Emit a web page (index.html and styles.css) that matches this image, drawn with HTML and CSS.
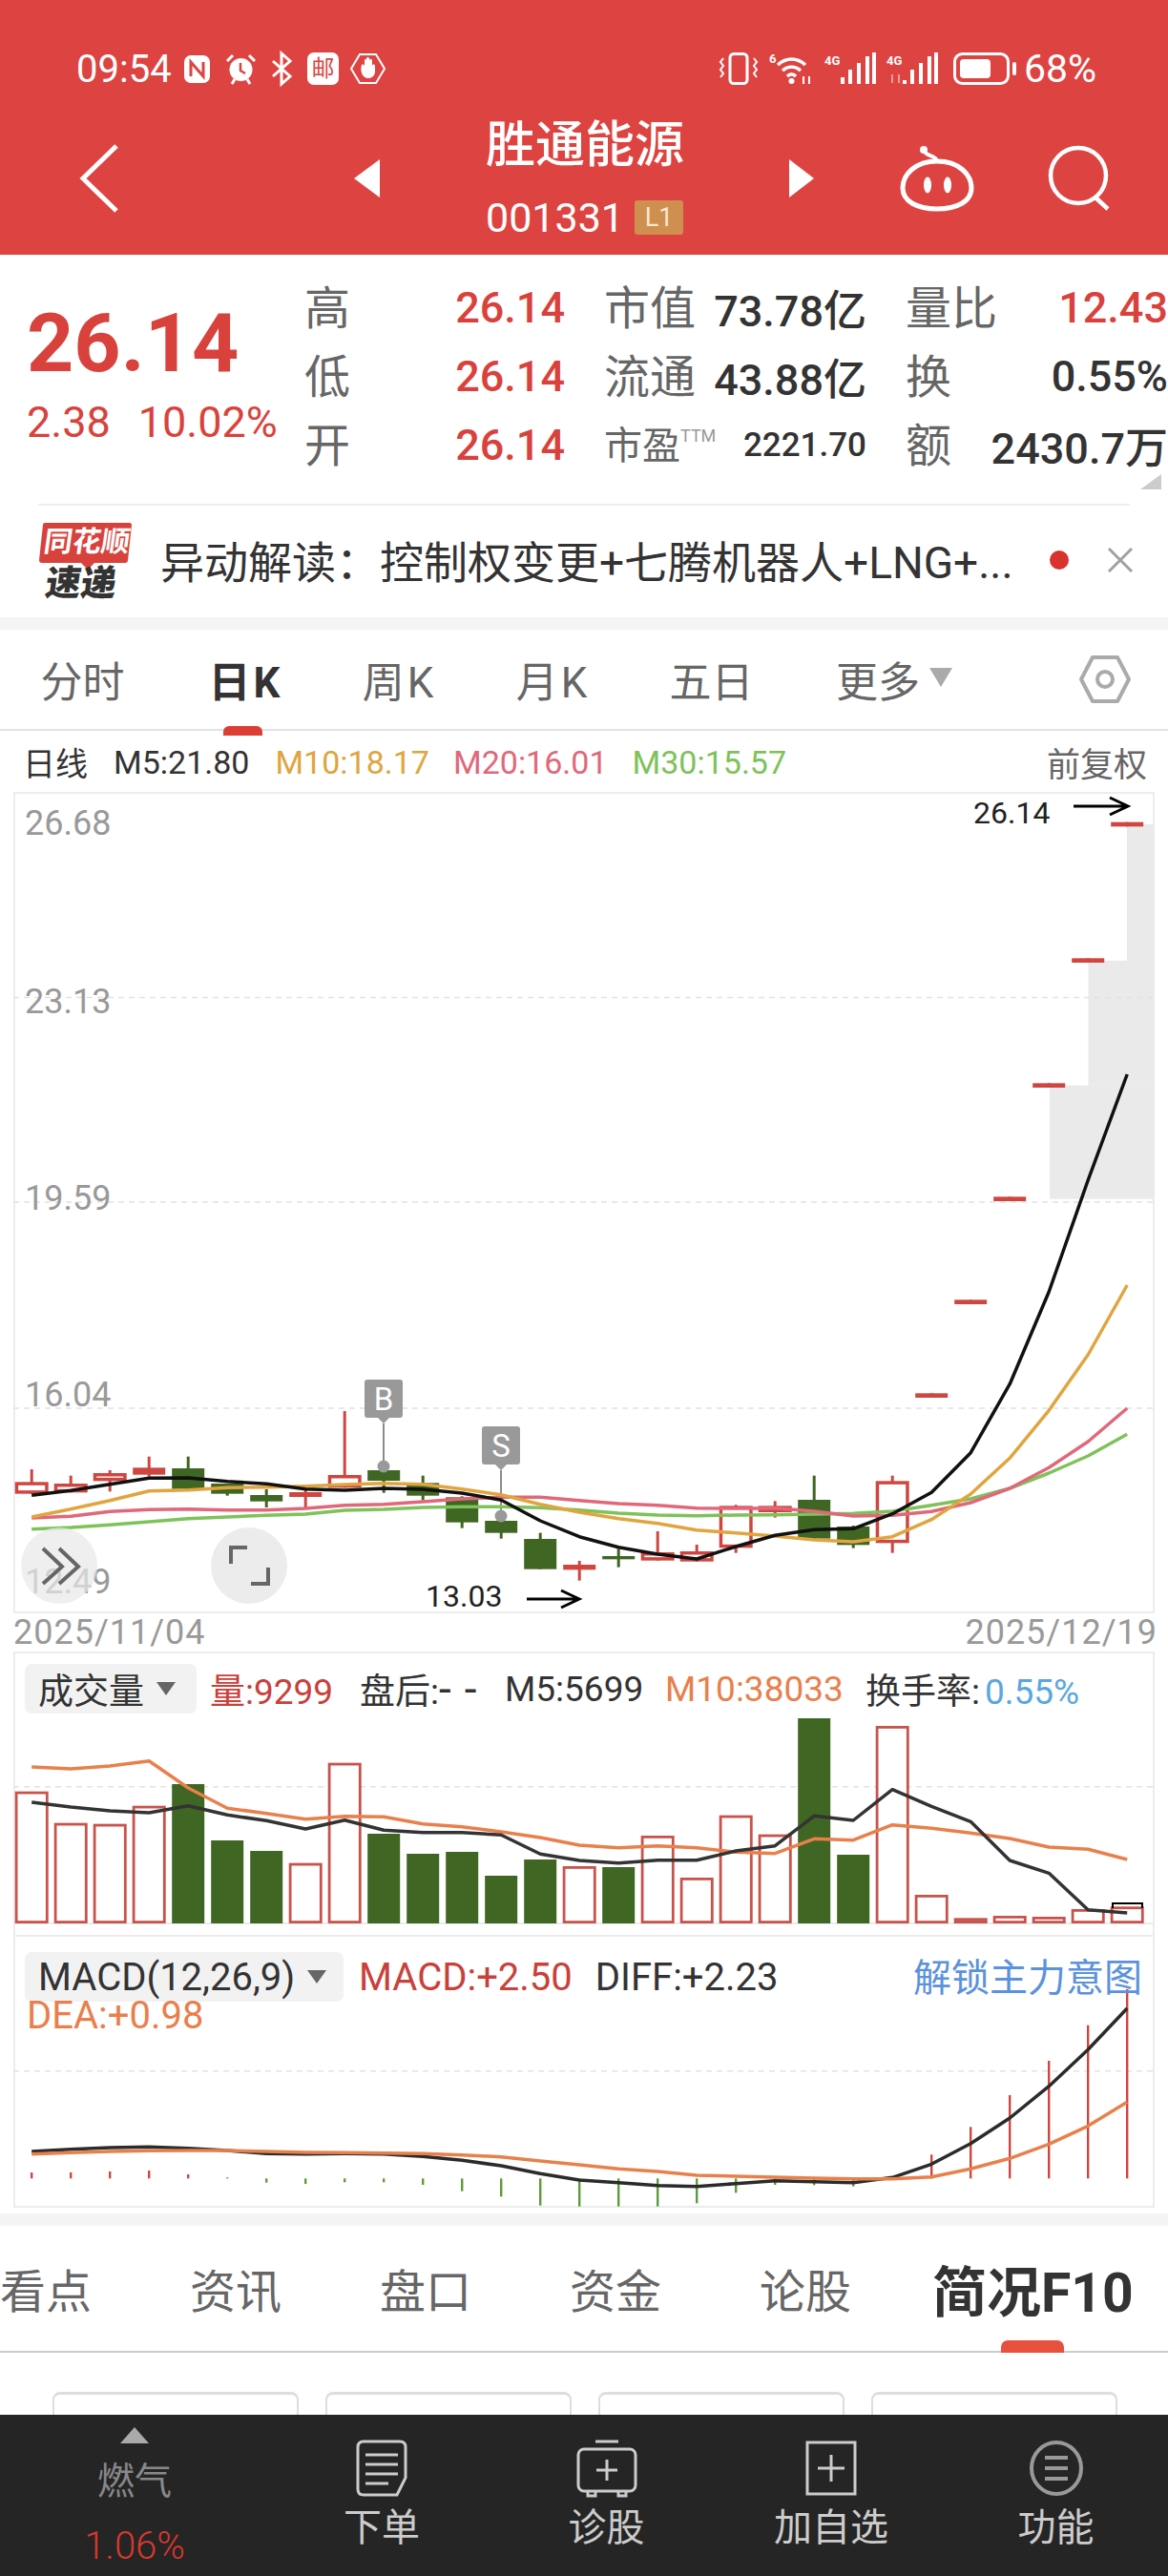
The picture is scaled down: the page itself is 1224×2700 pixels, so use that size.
FILE: index.html
```html
<!DOCTYPE html>
<html lang="zh-CN">
<head>
    <meta charset="UTF-8">
    <meta name="viewport" content="width=device-width, initial-scale=1.0">
    <title>胜通能源 001331</title>
    <link rel="stylesheet" href="styles.css">
</head>
<body>
<div class="page">
    <header class="top">
        <div class="status">
            <div class="status-group">
                <span class="clock">09:54</span>
                <svg class="ic-nfc" viewBox="0 0 31 31"><rect x="2" y="1" width="27" height="29" rx="7" fill="#fff"/><path d="M9 23V8l13 15V8" fill="none" stroke="#dd4441" stroke-width="3"/></svg>
                <svg class="ic-alarm" viewBox="0 0 33 33"><circle cx="16.500" cy="17" r="12" fill="#fff"/><path d="M16 10v8l5 3" fill="none" stroke="#dd4441" stroke-width="2.500"/><path d="M2 8l6-6M31 8l-6-6M7 32l3-5M26 32l-3-5" stroke="#fff" stroke-width="3"/></svg>
                <svg class="ic-bt" viewBox="0 0 25 34"><path d="M3 9l18 16-9 8V1l9 8L3 25" fill="none" stroke="#fff" stroke-width="3"/></svg>
                <span class="ic-mail">邮</span>
                <svg class="ic-hand" viewBox="0 0 37 34"><path d="M10 2h17l9 15-9 15H10L1 17z" fill="none" stroke="#fff" stroke-width="2"/><path d="M12 13c2-1 3 0 3 2V9c0-3 2-3 2 0V7c0-3 3-3 3 0v2c0-3 3-3 3 0v5c0-2 3-2 3 0v6c0 4-3 7-7 7-6 0-9-7-7-14z" fill="#fff"/></svg>
            </div>
            <div class="status-group">
                <svg class="ic-vib" viewBox="0 0 42 34"><rect x="12" y="1.500" width="18" height="31" rx="4" fill="none" stroke="#fff" stroke-width="3"/><path d="M5 6l-3 4 3 4-3 4 3 4-3 4M37 6l3 4-3 4 3 4-3 4 3 4" fill="none" stroke="#fff" stroke-width="2"/></svg>
                <svg class="ic-wifi" viewBox="0 0 49 34"><text x="0" y="11" class="tiny">6</text><path d="M9 13c9-8 20-8 29 0M14 19c6-5 13-5 19 0M19 25c3-3 6-3 9 0" fill="none" stroke="#fff" stroke-width="3.500"/><circle cx="23.500" cy="30" r="3" fill="#fff"/><path d="M36 33v-8M42 25v8" stroke="#fff" stroke-width="2"/></svg>
                <svg class="ic-sig" viewBox="0 0 56 34"><text x="0" y="13" class="tiny">4G</text><path d="M21 33v-7M29 33V18M38 33V11M47 33V4M54 33V0" stroke="#fff" stroke-width="4" transform="translate(-2 0)"/></svg>
                <svg class="ic-sig" viewBox="0 0 56 34"><text x="0" y="13" class="tiny">4G</text><path d="M6 32v-9M13 23v9" stroke="#f19a96" stroke-width="2"/><path d="M21 33v-4M29 33V18M38 33V11M47 33V4M54 33V0" stroke="#fff" stroke-width="4" transform="translate(-2 0)"/></svg>
                <svg class="ic-batt" viewBox="0 0 67 34"><rect x="1.500" y="1.500" width="56" height="31" rx="8" fill="none" stroke="#fff" stroke-width="3"/><rect x="7" y="7" width="32" height="20" rx="4" fill="#fff"/><rect x="62" y="10" width="4" height="14" rx="2" fill="#fff"/></svg>
                <span class="clock">68%</span>
            </div>
        </div>
        <nav class="nav">
            <svg class="nav-back" viewBox="0 0 41 70"><path d="M38 1L3 35l35 34" fill="none" stroke="#fff" stroke-width="5"/></svg>
            <span class="arrow-left"></span>
            <div class="stock">
                <div class="stock-name">胜通能源</div>
                <div class="stock-code">001331<span class="badge">L1</span></div>
            </div>
            <span class="arrow-right"></span>
            <svg class="nav-robot" viewBox="0 0 78 68"><circle cx="25" cy="4" r="4" fill="#fff"/><path d="M26 5c0 6 12 4 13 11" fill="none" stroke="#fff" stroke-width="4"/><path d="M39 16C62 16 75 30 75 44 75 58 60 66 39 66 18 66 3 58 3 44 3 30 16 16 39 16z" fill="none" stroke="#fff" stroke-width="5"/><ellipse cx="29" cy="41" rx="4" ry="8.500" fill="#fff"/><ellipse cx="50" cy="41" rx="4" ry="8.500" fill="#fff"/></svg>
            <svg class="nav-search" viewBox="0 0 66 66"><circle cx="32" cy="30" r="29" fill="none" stroke="#fff" stroke-width="4.500"/><path d="M50 53l13 12" stroke="#fff" stroke-width="4.500"/></svg>
        </nav>
    </header>

    <section class="quote">
        <div class="quote-main">
            <div class="price">26.14</div>
            <div class="change"><span>2.38</span><span>10.02%</span></div>
        </div>
        <div class="quote-grid">
            <div class="cell"><span class="label">高</span><span class="val red">26.14</span></div>
            <div class="cell"><span class="label">市值</span><span class="val dark">73.78亿</span></div>
            <div class="cell"><span class="label">量比</span><span class="val red">12.43</span></div>
            <div class="cell"><span class="label">低</span><span class="val red">26.14</span></div>
            <div class="cell"><span class="label">流通</span><span class="val dark">43.88亿</span></div>
            <div class="cell"><span class="label">换</span><span class="val dark">0.55%</span></div>
            <div class="cell"><span class="label">开</span><span class="val red">26.14</span></div>
            <div class="cell"><span class="label small">市盈<sup>TTM</sup></span><span class="val dark pe">2221.70</span></div>
            <div class="cell"><span class="label">额</span><span class="val dark">2430.7万</span></div>
        </div>
        <span class="corner"></span>
    </section>
    <div class="divider"></div>

    <section class="news">
        <svg class="news-logo" viewBox="0 0 97 80">
            <path d="M6 1h89q2 0 2 2l-4 37q0 3-3 3H58l-7 7-7-7H3q-3 0-3-3L4 3q0-2 2-2z" fill="#d8423c"/>
            <text x="48" y="31" class="logo-top" transform="skewX(-8) translate(5 0)">同花顺</text>
            <text x="44" y="77" class="logo-bot" transform="skewX(-8) translate(9 0)">速递</text>
        </svg>
        <div class="news-text">异动解读：控制权变更+七腾机器人+LNG+...</div>
        <span class="news-dot"></span>
        <svg class="news-close" viewBox="0 0 28 28"><path d="M2 2l24 24M26 2L2 26" stroke="#a0a0a0" stroke-width="3"/></svg>
    </section>
    <div class="band"></div>

    <div class="tabs">
        <span class="tab">分时</span>
        <span class="tab active">日K</span>
        <span class="tab">周K</span>
        <span class="tab">月K</span>
        <span class="tab tab-five">五日</span>
        <span class="tab more">更多<i></i></span>
        <svg class="tab-gear" viewBox="0 0 54 52"><path d="M14 3h26l12 23-12 23H14L2 26z" fill="none" stroke="#aaa" stroke-width="4" stroke-linejoin="round"/><circle cx="27" cy="26" r="8" fill="none" stroke="#aaa" stroke-width="4"/></svg>
    </div>

    <div class="ma-legend">
        <span class="ma-name">日线</span>
        <span class="ma-dark">M5:21.80</span>
        <span class="ma-10">M10:18.17</span>
        <span class="ma-20">M20:16.01</span>
        <span class="ma-30">M30:15.57</span>
        <span class="ma-adj">前复权</span>
    </div>

    <svg id="kline" class="chart-kline" viewBox="0 831 1224 859"></svg>
    <div class="dates"><span>2025/11/04</span><span>2025/12/19</span></div>

    <div class="panel panel-vol">
        <svg id="vol" class="chart-vol" viewBox="0 1731 1224 297"></svg>
        <div class="legend legend-vol">
            <span class="pill pill-vol">成交量<i></i></span>
            <span class="t-red v-amount">量:9299</span>
            <span class="v-after">盘后:<span class="dash">--</span></span>
            <span class="v-ma5">M5:5699</span>
            <span class="t-orange v-ma10">M10:38033</span>
            <span>换手率:<span class="t-blue">0.55%</span></span>
        </div>
    </div>

    <div class="panel panel-macd">
        <svg id="macd" class="chart-macd" viewBox="0 2028 1224 292"></svg>
        <div class="legend legend-macd">
            <span class="pill pill-macd">MACD(12,26,9)<i></i></span>
            <span class="t-red">MACD:+2.50</span>
            <span class="m-diff">DIFF:+2.23</span>
            <span class="unlock">解锁主力意图</span>
        </div>
        <div class="dea t-orange">DEA:+0.98</div>
    </div>
    <div class="band"></div>

    <div class="subtabs">
        <span>看点</span>
        <span>资讯</span>
        <span>盘口</span>
        <span>资金</span>
        <span>论股</span>
        <span class="active">简况F10</span>
    </div>

    <div class="cards">
        <div class="card"></div>
        <div class="card"></div>
        <div class="card"></div>
        <div class="card"></div>
    </div>

    <footer class="bar">
        <div class="bar-item bar-index">
            <span class="up"></span>
            <span class="index-name">燃气</span>
            <span class="index-pct">1.06%</span>
        </div>
        <div class="bar-item">
            <svg class="bar-icon" viewBox="0 0 54 60"><path d="M8 2h38q6 0 6 6v32l-9 18H8q-6 0-6-6V8q0-6 6-6z" fill="none" stroke="#ccc" stroke-width="3"/><path d="M10 16h34M10 26h34M10 36h34M10 46h24" stroke="#ccc" stroke-width="3"/></svg>
            <span>下单</span>
        </div>
        <div class="bar-item">
            <svg class="bar-icon" viewBox="0 0 64 60"><path d="M20 2h24" stroke="#ccc" stroke-width="3"/><rect x="2" y="10" width="60" height="44" rx="6" fill="none" stroke="#ccc" stroke-width="3"/><path d="M32 21v22M21 32h22M12 55v4h8v-4M44 55v4h8v-4" fill="none" stroke="#ccc" stroke-width="3"/></svg>
            <span>诊股</span>
        </div>
        <div class="bar-item">
            <svg class="bar-icon" viewBox="0 0 54 60"><rect x="2" y="3" width="50" height="54" fill="none" stroke="#ccc" stroke-width="3"/><path d="M27 16v28M13 30h28" stroke="#ccc" stroke-width="3"/></svg>
            <span>加自选</span>
        </div>
        <div class="bar-item">
            <svg class="bar-icon" viewBox="0 0 56 60"><ellipse cx="28" cy="30" rx="26" ry="27" fill="none" stroke="#999" stroke-width="4"/><path d="M16 19h24M16 30h24M16 41h24" stroke="#999" stroke-width="4"/></svg>
            <span>功能</span>
        </div>
    </footer>
</div>
<script src="chart.js"></script>
</body>
</html>
```

FILE: styles.css
```css
* {
    box-sizing: border-box;
}
body {
    margin: 0;
    background: #fff;
    font-family: Roboto, "Noto Sans CJK SC", sans-serif;
    color: #333;
}
.page {
    position: relative;
    width: 1224px;
    height: 2700px;
    overflow: hidden;
}
svg {
    display: block;
    flex: none;
    overflow: visible;
}

/* red header */
.top {
    height: 267px;
    background: #dd4441;
    color: #fff;
}
.status {
    height: 116px;
    padding: 28px 75px 0 80px;
    display: flex;
    justify-content: space-between;
}
.status-group {
    display: flex;
    align-items: center;
}
.clock {
    font-size: 40px;
    width: 98px;
}
.status-group:last-child .clock {
    width: 76px;
    margin-left: 7px;
    font-size: 41px;
    white-space: nowrap;
}
.ic-nfc { width: 31px; height: 31px; margin-left: 13px; }
.ic-alarm { width: 33px; height: 33px; margin-left: 14px; }
.ic-bt { width: 25px; height: 34px; margin-left: 14px; }
.ic-mail {
    width: 33px;
    height: 34px;
    margin-left: 14px;
    background: #fff;
    border-radius: 7px;
    color: #dd4441;
    font-size: 24px;
    line-height: 34px;
    text-align: center;
}
.ic-hand { width: 37px; height: 34px; margin-left: 12px; }
.ic-vib { width: 42px; height: 34px; }
.ic-wifi { width: 49px; height: 34px; margin-left: 11px; }
.ic-sig { width: 56px; height: 34px; margin-left: 9px; }
.ic-batt { width: 67px; height: 34px; margin-left: 14px; }
.tiny {
    font-size: 13px;
    font-weight: 700;
    fill: #fff;
}
.nav {
    height: 151px;
    padding: 0 0 9px 84px;
    display: flex;
    align-items: center;
}
.nav-back { width: 41px; height: 70px; }
.arrow-left, .arrow-right {
    width: 0;
    height: 0;
    border-top: 20px solid transparent;
    border-bottom: 20px solid transparent;
}
.arrow-left {
    margin-left: 246px;
    border-right: 27px solid #fff;
}
.arrow-right {
    border-left: 26px solid #fff;
}
.stock {
    width: 207px;
    margin: 0 111px;
}
.stock-name {
    font-size: 52px;
    font-weight: 500;
    line-height: 66px;
    white-space: nowrap;
}
.stock-code {
    margin-top: 15px;
    font-size: 43px;
    line-height: 54px;
    display: flex;
    align-items: center;
    justify-content: space-between;
}
.badge {
    width: 51px;
    height: 36px;
    background: #cf8f4f;
    border-radius: 3px;
    color: #f8e8d0;
    font-size: 27px;
    line-height: 36px;
    text-align: center;
}
.nav-robot { width: 78px; height: 68px; margin-left: 90px; }
.nav-search { width: 66px; height: 66px; margin-left: 77px; }

/* quote */
.quote {
    position: relative;
    height: 261px;
    display: flex;
}
.quote-main {
    width: 320px;
    padding: 43px 0 0 28px;
    color: #d9423c;
}
.price {
    font-size: 86px;
    font-weight: 700;
    line-height: 100px;
}
.change {
    margin-top: 8px;
    font-size: 45px;
    line-height: 50px;
    display: flex;
    gap: 29px;
    white-space: nowrap;
}
.quote-grid {
    padding-top: 19px;
    display: grid;
    grid-template-columns: 273px 275px 275px;
    grid-auto-rows: 72px;
    column-gap: 41px;
}
.cell {
    display: flex;
    justify-content: space-between;
    align-items: center;
    white-space: nowrap;
}
.label {
    margin-bottom: 6px;
    font-size: 48px;
    color: #666;
}
.label.small {
    margin-bottom: 4px;
    font-size: 40px;
}
.label sup {
    font-size: 18px;
    color: #999;
    vertical-align: 18px;
    line-height: 0;
}
.val {
    font-size: 45px;
    font-weight: 500;
}
.val.red { color: #d9423c; }
.val.dark { color: #333; }
.val.pe { font-size: 35px; }
.corner {
    position: absolute;
    right: 7px;
    top: 230px;
    width: 0;
    height: 0;
    border-left: 22px solid transparent;
    border-bottom: 16px solid #ccc;
}
.divider {
    height: 2px;
    margin: 0 40px;
    background: #eee;
}

/* news row */
.news {
    height: 117px;
    padding: 0 0 3px 41px;
    display: flex;
    align-items: center;
}
.news-logo { width: 97px; height: 80px; }
.logo-top {
    font-size: 30px;
    font-weight: 700;
    fill: #fff;
    text-anchor: middle;
}
.logo-bot {
    font-size: 37px;
    font-weight: 900;
    fill: #333;
    text-anchor: middle;
}
.news-text {
    width: 921px;
    margin-left: 30px;
    margin-bottom: 3px;
    font-size: 46px;
    white-space: nowrap;
}
.news-dot {
    width: 20px;
    height: 20px;
    margin-left: 11px;
    border-radius: 50%;
    background: #d9332e;
}
.news-close { width: 28px; height: 28px; margin-left: 40px; }
.band {
    height: 13px;
    background: #f4f4f4;
}

/* period tabs */
.tabs {
    height: 106px;
    padding: 0 39px 0 6px;
    border-bottom: 2px solid #e2e2e2;
    display: flex;
    align-items: center;
}
.tab {
    position: relative;
    width: 161px;
    font-size: 44px;
    color: #666;
    text-align: center;
    letter-spacing: 3px;
}
.tab:first-child {
    margin-right: 10px;
    letter-spacing: 0;
}
.tab.tab-five {
    margin-left: 5px;
    letter-spacing: 0;
}
.tab.active {
    font-weight: 700;
    color: #333;
}
.tab.active::after {
    content: "";
    position: absolute;
    left: 57px;
    bottom: -27px;
    width: 41px;
    height: 10px;
    border-radius: 6px 6px 0 0;
    background: #dc3e36;
}
.tab.more {
    width: auto;
    margin-left: 50px;
    letter-spacing: 0;
    display: flex;
    align-items: center;
}
.tab.more i {
    width: 0;
    height: 0;
    margin: 0 0 4px 10px;
    border-left: 12px solid transparent;
    border-right: 12px solid transparent;
    border-top: 20px solid #aaa;
}
.tab-gear { width: 54px; height: 52px; margin-left: auto; }

/* moving averages line */
.ma-legend {
    height: 65px;
    padding: 0 22px 0 24px;
    display: flex;
    align-items: center;
    font-size: 34px;
    white-space: nowrap;
}
.ma-dark { margin-left: 27px; }
.ma-10 { margin-left: 27px; color: #e0a53f; }
.ma-20 { margin-left: 25px; color: #e0687a; }
.ma-30 { margin-left: 26px; color: #7ec25a; }
.ma-adj { margin-left: auto; color: #666; font-size: 35px; }

.chart-kline { width: 1224px; height: 859px; }
.chart-vol { width: 1224px; height: 297px; }
.chart-macd { width: 1224px; height: 292px; }
.chart-label {
    font-size: 36px;
    fill: #999;
}
.chart-mark {
    font-size: 32px;
    fill: #222;
}
.pin-text {
    font-size: 33px;
    fill: #fff;
    text-anchor: middle;
}

.dates {
    height: 41px;
    padding: 0 11px 0 14px;
    display: flex;
    justify-content: space-between;
    align-items: center;
    font-size: 36px;
    color: #999;
    letter-spacing: 1px;
}

/* indicator panels */
.panel {
    position: relative;
}
.legend {
    position: absolute;
    left: 26px;
    right: 27px;
    display: flex;
    align-items: center;
    white-space: nowrap;
    color: #333;
}
.legend-vol {
    top: 12px;
    font-size: 37px;
}
.legend-vol .pill {
    margin-right: 14px;
}
.v-amount { width: 157px; }
.v-after { width: 152px; }
.v-ma5 { width: 168px; }
.v-ma10 { width: 210px; }
.dash {
    font-size: 46px;
    line-height: 37px;
    letter-spacing: 14px;
}
.t-blue { margin-left: 5px; }
.legend-macd {
    top: 13px;
    font-size: 40px;
    gap: 16px;
}
.m-diff { margin-left: 8px; }
.pill {
    position: relative;
    height: 52px;
    background: #f2f2f2;
    border-radius: 7px;
    display: flex;
    align-items: center;
}
.pill i {
    width: 0;
    height: 0;
    border-top: 14px solid #666;
    border-left: 10px solid transparent;
    border-right: 10px solid transparent;
}
.pill-vol {
    width: 180px;
    padding-left: 14px;
}
.pill-vol i { margin-left: 13px; }
.pill-macd {
    width: 334px;
    padding-left: 14px;
}
.pill-macd i { margin-left: 13px; }
.unlock {
    margin-left: auto;
    margin-bottom: 4px;
    color: #5b92dd;
}
.dea {
    position: absolute;
    left: 28px;
    top: 65px;
    font-size: 40px;
    line-height: 40px;
}
.t-red { color: #c8413b; }
.t-orange { color: #e87f4c; }
.t-blue { color: #5aa6e0; }

/* lower tabs */
.subtabs {
    height: 133px;
    padding-bottom: 2px;
    border-bottom: 2px solid #ccc;
    display: flex;
    align-items: center;
    gap: 103px;
    font-size: 48px;
    color: #666;
    white-space: nowrap;
}
.subtabs .active {
    position: relative;
    margin-left: -18px;
    font-size: 57px;
    font-weight: 700;
    color: #333;
}
.subtabs .active::after {
    content: "";
    position: absolute;
    left: 72px;
    bottom: -27px;
    width: 66px;
    height: 13px;
    border-radius: 7px 7px 0 0;
    background: #e8503e;
}
.cards {
    margin: 41px 53px 0 55px;
    display: grid;
    grid-template-columns: repeat(4, 258px);
    column-gap: 28px;
}
.card {
    height: 120px;
    border: 2px solid #ddd;
    border-top-width: 3px;
    border-radius: 8px;
}

/* bottom bar */
.bar {
    position: absolute;
    left: 0;
    right: 0;
    bottom: 0;
    height: 169px;
    padding-top: 26px;
    background: #252525;
    display: grid;
    grid-template-columns: 282px 236px 235px 236px 235px;
    color: #ccc;
    font-size: 40px;
}
.bar-item {
    display: flex;
    flex-direction: column;
    align-items: center;
    line-height: 56px;
    gap: 5px;
}
.bar-icon {
    height: 60px;
}
.bar-index {
    margin-top: -13px;
    gap: 0;
}
.up {
    width: 0;
    height: 0;
    border-left: 15px solid transparent;
    border-right: 15px solid transparent;
    border-bottom: 17px solid #aaa;
}
.index-name {
    margin-top: 12px;
    color: #888;
    font-size: 39px;
}
.index-pct {
    margin-top: 12px;
    color: #d9382c;
    font-size: 40px;
    font-weight: 300;
}
```

FILE: chart.js
```js
// Values below were read off at 3 units per pixel, counted from a reference line.
// i is the trading day, 0..28, and every day is 41px wide.
const dayX = i => 33.2 + 41 * i;
const RED = '#cf4640', GREEN = '#3f6622';

function polyline(points, color, width) {
    const pts = points.map(p => p[0].toFixed(1) + ',' + p[1].toFixed(1)).join(' ');
    return `<polyline points="${pts}" fill="none" stroke="${color}" stroke-width="${width}" stroke-linejoin="round"/>`;
}

function series(values, toY) {
    return values.map((v, i) => [dayX(i), toY(v)]);
}

function rect(x, y, w, h, fill) {
    return `<rect x="${x}" y="${y}" width="${w}" height="${h}" fill="${fill}"/>`;
}

function hollow(x, y, w, h, stroke, sw) {
    return `<rect x="${x + sw / 2}" y="${y + sw / 2}" width="${w - sw}" height="${h - sw}" fill="#fff" stroke="${stroke}" stroke-width="${sw}"/>`;
}

function dashed(y) {
    return `<line x1="14" x2="1210" y1="${y}" y2="${y}" stroke="#e2e2e2" stroke-width="1.500" stroke-dasharray="6 5"/>`;
}

function frame(top, bottom) {
    return `<path d="M15 ${bottom}V${top}H1209V${bottom}" fill="none" stroke="#ececec" stroke-width="2"/>`;
}

/* ---------- daily candles ---------- */
const ky = v => 1400 + v / 3;
// [type, bodyTop, bodyBottom, wickTop, wickBottom]  r = hollow red, f = solid red, g = solid green
const candles = [
    ['r', 460, 497, 420, 497], ['r', 465, 493, 440, 493], ['r', 432, 457, 423, 490], ['f', 415, 437, 380, 443],
    ['g', 417, 482, 380, 482], ['g', 465, 497, 465, 503], ['g', 501, 521, 483, 540], ['f', 492, 507, 485, 540],
    ['r', 438, 478, 237, 478], ['g', 423, 456, 423, 494], ['g', 463, 503, 440, 517], ['g', 508, 587, 505, 605],
    ['g', 582, 620, 570, 638], ['g', 639, 734, 620, 734], ['f', 720, 736, 708, 770], ['g', 693, 703, 670, 728],
    ['r', 681, 707, 615, 707], ['r', 678, 710, 657, 710], ['r', 535, 667, 532, 683], ['r', 535, 555, 520, 572],
    ['g', 516, 638, 440, 638], ['g', 600, 658, 597, 668], ['r', 457, 652, 440, 683], ['f', 181, 195, 181, 195],
    ['f', -113, -99, -113, -99], ['f', -437, -423, -437, -423], ['f', -794, -780, -794, -780],
    ['f', -1187, -1173, -1187, -1173], ['f', -1615, -1601, -1615, -1601]
];
const ma5 = [502, 487, 467, 448, 447, 458, 466, 482, 486, 480, 483, 495, 517, 582, 632, 665, 687, 702, 663, 628, 610, 607, 560, 493, 368, 152, -138, -489, -822];
const ma10 = [570, 545, 518, 488, 485, 478, 476, 473, 468, 464, 467, 482, 500, 530, 555, 575, 590, 611, 620, 630, 642, 648, 632, 578, 498, 385, 235, 60, -159];
const ma20 = [573, 568, 553, 547, 545, 548, 548, 543, 533, 530, 522, 513, 508, 508, 518, 528, 533, 542, 543, 542, 552, 567, 565, 553, 525, 480, 415, 333, 228];
const ma30 = [608, 603, 595, 585, 575, 570, 565, 561, 549, 546, 540, 538, 538, 541, 548, 558, 564, 566, 564, 563, 561, 559, 552, 533, 513, 480, 432, 378, 310];

function pin(x, top, letter, lineEnd) {
    const b = top + 40;
    return `<path d="M${x} ${top + 46}V${lineEnd}" stroke="#8c8c8c" stroke-width="2"/>` +
        `<circle cx="${x}" cy="${lineEnd - 4}" r="6.500" fill="#999"/>` +
        `<path d="M${x - 17} ${top}h34q3 0 3 3v${b - top - 6}q0 3-3 3h-11l-6 6-6-6h-11q-3 0-3-3v-${b - top - 6}q0-3 3-3z" fill="#999"/>` +
        `<text x="${x}" y="${top + 32}" class="pin-text">${letter}</text>`;
}

function arrow(x1, x2, y) {
    return `<path d="M${x1} ${y}H${x2}M${x2 - 19} ${y - 9}L${x2} ${y}L${x2 - 19} ${y + 9}" fill="none" stroke="#000" stroke-width="3"/>`;
}

function drawKline() {
    let s = frame(831, 1690);
    s += `<path d="M14 1690H1210" stroke="#ececec" stroke-width="2"/>`;
    s += rect(1100, 1137.600, 110, 119.100, '#eaeaea') + rect(1140.500, 1006.800, 69.500, 131, '#eaeaea') + rect(1181, 864, 29, 143, '#eaeaea');
    [1045.400, 1260, 1476].forEach(y => s += dashed(y));
    [['26.68', 875], ['23.13', 1062], ['19.59', 1268], ['16.04', 1474], ['12.49', 1670]].forEach(l => {
        s += `<text x="26" y="${l[1]}" class="chart-label">${l[0]}</text>`;
    });
    candles.forEach((c, i) => {
        const x = dayX(i), color = c[0] === 'g' ? GREEN : RED;
        const t = ky(c[1]), b = ky(c[2]);
        s += rect(x - 1.500, ky(c[3]), 3, ky(c[4]) - ky(c[3]), color);
        if (c[0] === 'r') s += hollow(x - 17.500, t, 35, b - t, color, 3.500);
        else s += rect(x - 17, t, 34, b - t, color);
    });
    s += pin(402, 1446, 'B', 1541) + pin(525, 1495, 'S', 1593);
    s += polyline(series(ma30, ky), '#7ec25a', 3.500);
    s += polyline(series(ma20, ky), '#e0687a', 3.500);
    s += polyline(series(ma10, ky), '#e0a53f', 3.500);
    s += polyline(series(ma5, ky), '#111', 3.500);
    s += `<text x="1020" y="863" class="chart-mark">26.14</text>` + arrow(1125, 1182, 845);
    s += `<text x="446" y="1684" class="chart-mark">13.03</text>` + arrow(552, 607, 1676);
    s += `<circle cx="62" cy="1641" r="40" fill="#e8e8e8" fill-opacity=".7"/><circle cx="261" cy="1641" r="40" fill="#ececec"/>`;
    s += `<path d="M45 1623l20 19-20 18M62 1623l20 19-20 18" fill="none" stroke="#666" stroke-width="4"/>`;
    s += `<path d="M242 1639v-17h17M263 1660h18v-17" fill="none" stroke="#666" stroke-width="4"/>`;
    document.getElementById('kline').innerHTML = s;
}

/* ---------- volume ---------- */
const vy = v => 1720 + v / 3;
const volTop = [473, 572, 575, 518, 450, 627, 660, 698, 383, 606, 669, 663, 738, 687, 708, 711, 612, 744, 548, 608, 243, 672, 267, 798, 871, 864, 867, 843, 835];
const volUp = [1, 1, 1, 1, 0, 0, 0, 1, 1, 0, 0, 0, 0, 0, 1, 0, 1, 1, 1, 1, 0, 0, 1, 1, 1, 1, 1, 1, 1];
const volMa5 = [507, 522, 534, 540, 518, 547, 565, 591, 563, 595, 602, 602, 610, 670, 690, 698, 689, 689, 660, 644, 550, 564, 467, 520, 568, 690, 730, 845, 855];
const volMa10 = [396, 402, 393, 377, 462, 526, 542, 560, 551, 553, 575, 584, 600, 618, 642, 650, 644, 650, 664, 668, 622, 626, 578, 589, 604, 621, 648, 655, 687];

function drawVol() {
    let s = frame(1732, 2028);
    s += dashed(1872.700) + `<path d="M14 2016H1210" stroke="#ececec" stroke-width="2"/>`;
    volTop.forEach((v, i) => {
        const x = dayX(i), t = vy(v), h = 2016 - t;
        if (volUp[i]) s += hollow(x - 17.500, t, 35, h, '#c8534d', 2.800);
        else s += rect(x - 17, t, 34, h, GREEN);
    });
    s += `<path d="M1166 2000v-5h31v5" fill="none" stroke="#000" stroke-width="2"/>`;
    s += polyline(series(volMa10, vy), '#e8804c', 3.500);
    s += polyline(series(volMa5, vy), '#333', 3.500);
    document.getElementById('vol').innerHTML = s;
}

/* ---------- macd ---------- */
const my = v => 2020 + v / 3;
const hist = [771, 771, 768, 765, 777, 787, 803, 807, 802, 802, 810, 830, 847, 875, 878, 878, 878, 868, 835, 810, 811, 815, 790, 715, 628, 528, 420, 308, 195];
const diff = [705, 698, 693, 691, 695, 702, 712, 713, 712, 713, 721, 733, 750, 775, 795, 803, 812, 815, 806, 797, 800, 803, 787, 745, 680, 600, 500, 385, 255];
const dea = [713, 709, 705, 703, 702, 702, 705, 708, 709, 710, 712, 716, 722, 735, 747, 760, 768, 780, 783, 786, 789, 791, 791, 785, 760, 727, 682, 625, 550];

function drawMacd() {
    let s = frame(2029, 2313);
    s += `<path d="M14 2313H1210" stroke="#ececec" stroke-width="2"/>`;
    s += dashed(2170.700);
    hist.forEach((v, i) => {
        const x = dayX(i) - 1.200, base = my(790);
        const y = my(v);
        if (v < 790) s += rect(x, y, 2.400, base - y, '#cf4640');
        else if (v > 790) s += rect(x, base, 2.400, y - base, '#5d9c3a');
    });
    s += polyline(series(diff, my), '#2b2b2b', 3.500);
    s += polyline(series(dea, my), '#e8804c', 3.500);
    document.getElementById('macd').innerHTML = s;
}

drawKline();
drawVol();
drawMacd();
```
